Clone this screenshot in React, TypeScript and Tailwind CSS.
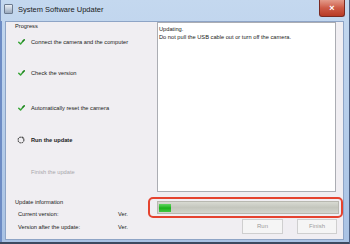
import React from "react";

function Check() {
  return (
    <svg width="7" height="6" viewBox="0 0 8 7" className="shrink-0">
      <path d="M0.8 3.8 L2.9 5.8 L7.2 1" fill="none" stroke="#3aa63a" strokeWidth="1.8" strokeLinecap="round" strokeLinejoin="round" />
      <path d="M5.4 2.6 L7.2 1" fill="none" stroke="#1f7d1f" strokeWidth="1.4" strokeLinecap="round" />
    </svg>
  );
}

function Spinner() {
  return (
    <svg width="8" height="8" viewBox="0 0 8 8" className="shrink-0">
      <circle cx="4" cy="4" r="2.9" fill="none" stroke="#4a4a4a" strokeWidth="1.1" strokeDasharray="1.6 0.7" />
      <path d="M5.3 0.6 L7.1 1.9 L5.2 2.6 Z" fill="#4a4a4a" />
    </svg>
  );
}

export default function App() {
  return (
    <div className="relative flex h-[244px] w-[350px] flex-col overflow-hidden bg-gradient-to-b from-[#c4d8ef] via-[#b6cdea] to-[#a9c2e4] font-['Liberation_Sans',Arial,sans-serif] text-[#1a1a1a]">
      {/* title bar */}
      <div className="flex h-[21px] shrink-0 items-start border-l border-[#7891bd]">
        <div className="ml-[3px] mt-[4px] h-[10px] w-[9px] rounded-[1px] border border-[#6b7a8f] bg-gradient-to-b from-[#e9eef5] to-[#9aa9bd]" />
        <span className="ml-[5px] mt-[5px] text-[7.5px] leading-[9px] text-[#1b1b1b]">System Software Updater</span>
        <div className="ml-auto mr-[5px] flex h-[17px] w-[26px] items-center justify-center rounded-b-[3px] border border-t-0 border-[#7a2a22] bg-gradient-to-b from-[#e39a8a] via-[#cd5a46] to-[#b83a24]">
          <span className="text-[9px] font-bold leading-none text-white">×</span>
        </div>
      </div>

      {/* frame body */}
      <div className="flex flex-1 border-l-2 border-[#6e8cc4] pb-[4px] pl-[3px] pr-[7px]">
        <div className="flex flex-1 flex-col border border-[#8ea4c6] bg-[#f0eef2]">
          <div className="flex h-[170px]">
            <div className="flex w-[151px] flex-col pl-[9px] text-[5.7px]">
              <div className="h-[9px] leading-[9px]">Progress</div>
              <div className="mt-[7px] flex h-[8px] items-center">
                <div className="ml-[3px] w-[13px]"><Check /></div>
                <span className="leading-[8px]">Connect the camera and the computer</span>
              </div>
              <div className="mt-[23px] flex h-[8px] items-center">
                <div className="ml-[3px] w-[13px]"><Check /></div>
                <span className="leading-[8px]">Check the version</span>
              </div>
              <div className="mt-[27px] flex h-[8px] items-center">
                <div className="ml-[3px] w-[13px]"><Check /></div>
                <span className="leading-[8px]">Automatically reset the camera</span>
              </div>
              <div className="mt-[24px] flex h-[8px] items-center">
                <div className="ml-[2px] w-[14px]"><Spinner /></div>
                <span className="font-bold leading-[8px]">Run the update</span>
              </div>
              <div className="mt-[24px] flex h-[8px] items-center">
                <div className="ml-[2px] w-[14px]" />
                <span className="leading-[8px] text-[#a8a6ab]">Finish the update</span>
              </div>
            </div>
            <div className="mr-[7px] flex-1 border border-[#abadb3] bg-white px-[1px] pt-[2px] text-[5.7px] leading-[8px]">
              <div>Updating.</div>
              <div>Do not pull the USB cable out or turn off the camera.</div>
            </div>
          </div>

          <div className="flex flex-1">
            <div className="flex w-[142px] flex-col pl-[9px] pt-[6px] text-[5.7px] leading-[8px]">
              <div>Update information</div>
              <div className="mt-[4px] flex pl-[3px]">
                <span className="w-[100px]">Current version:</span>
                <span>Ver.</span>
              </div>
              <div className="mt-[5px] flex pl-[3px]">
                <span className="w-[100px]">Version after the update:</span>
                <span>Ver.</span>
              </div>
            </div>
            <div className="flex flex-1 flex-col">
              <div className="mt-[5px] flex h-[21px] w-[195px] items-center rounded-[5px] border-2 border-[#e5432f] pl-[7px] pr-[2px]">
                <div className="flex h-[13px] flex-1 items-center border border-[#b8b8b0] bg-gradient-to-b from-[#d8dad2] via-[#c4c6bd] to-[#d3d5cd] pl-[1px]">
                  <div className="h-[8px] w-[12px] bg-gradient-to-b from-[#5fd65f] via-[#17b217] to-[#42c742]" />
                </div>
              </div>
              <div className="mt-[1px] flex gap-[14px] pl-[94px]">
                <div className="flex h-[15px] w-[41px] items-center justify-center border border-[#cfcfcf] bg-[#f5f5f5] text-[6px] text-[#9c9c9c]">Run</div>
                <div className="flex h-[15px] w-[40px] items-center justify-center border border-[#cfcfcf] bg-[#f5f5f5] text-[6px] text-[#9c9c9c]">Finish</div>
              </div>
            </div>
          </div>
        </div>
      </div>
      <div className="absolute bottom-0 left-0 h-[2px] w-full bg-[#3c4a60]" />
      <div className="absolute right-0 top-0 h-full w-[1px] bg-[#4a5d80]" />
    </div>
  );
}
